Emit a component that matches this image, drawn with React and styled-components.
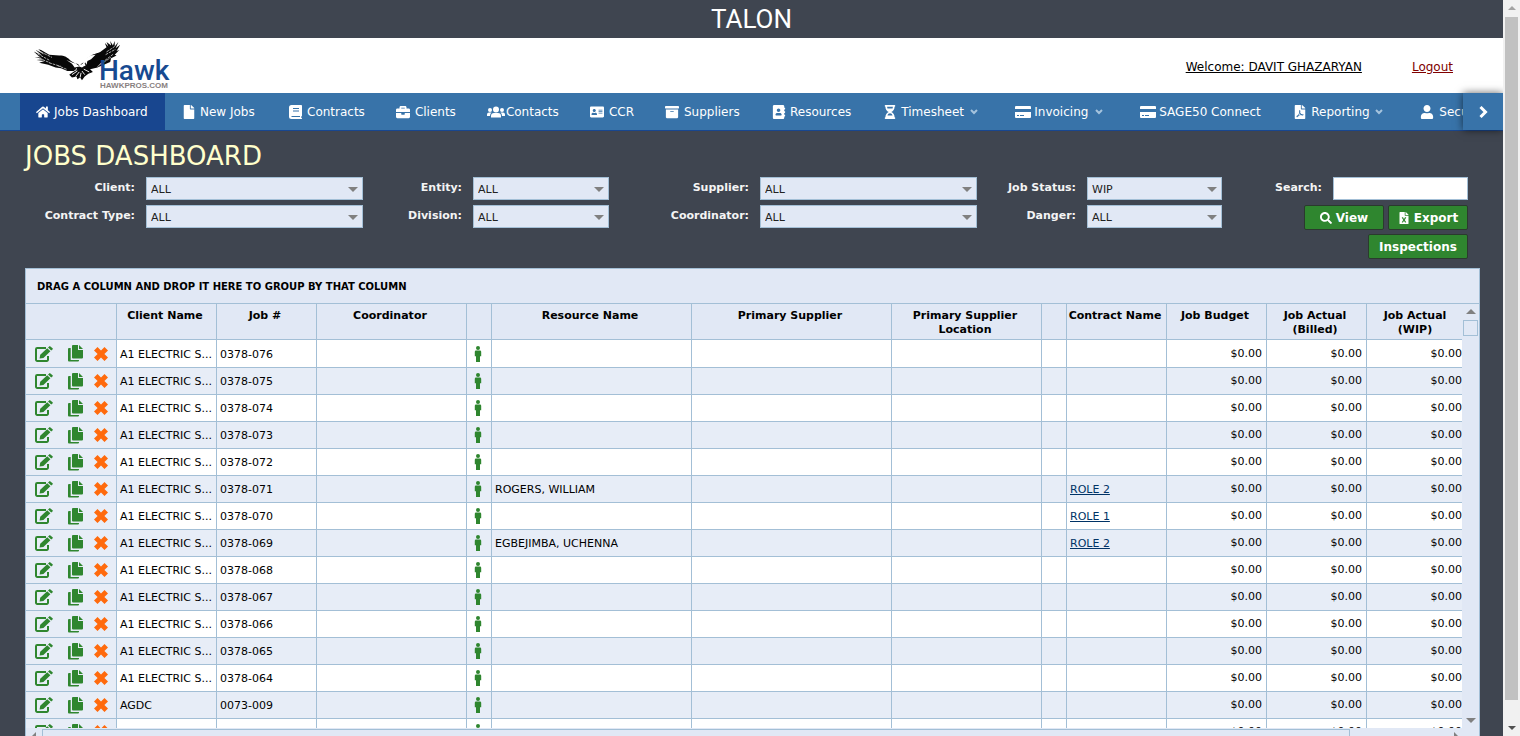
import React from "react";
import styled, { createGlobalStyle, css } from "styled-components";
import {
  FaHome, FaFile, FaBriefcase, FaAddressCard, FaArchive, FaAddressBook,
  FaHourglassHalf, FaFilePdf, FaUser, FaSearch, FaFileExcel,
} from "react-icons/fa";

const dark = "#3f4550";
const pale = "#e1e8f5";
const line = "#a3bfd6";
const green = "#2f862f";

const GlobalStyle = createGlobalStyle`
  * { box-sizing: border-box; }
  body {
    margin: 0;
    background: ${dark};
    font-family: "DejaVu Sans", Verdana, sans-serif;
    font-size: 11px;
    color: #000;
  }
`;

const Shell = styled.div`
  display: flex;
  height: 100vh;
  overflow: hidden;
`;

const Page = styled.div`
  flex: 1;
  min-width: 0;
  overflow: hidden;
`;

const PageScroll = styled.div`
  width: 17px;
  flex: none;
  display: flex;
  flex-direction: column;
  align-items: center;
  justify-content: space-between;
  padding: 6px 0;
  background: #f1f1f1;
`;

const PageThumb = styled.div`
  flex: 1;
  width: 13px;
  margin: 7px 0 26px;
  background: #c1c1c1;
`;

const Arrow = styled.span`
  width: 0;
  height: 0;
  flex: none;
  border: ${(p) => p.$size || 5}px solid transparent;
  ${(p) => p.$dir === "up" && css`border-top-width: 0; border-bottom-color: ${p.$color};`}
  ${(p) => p.$dir === "down" && css`border-bottom-width: 0; border-top-color: ${p.$color};`}
  ${(p) => p.$dir === "left" && css`border-left-width: 0; border-right-color: ${p.$color};`}
  ${(p) => p.$dir === "right" && css`border-right-width: 0; border-left-color: ${p.$color};`}
`;

const Banner = styled.div`
  height: 38px;
  display: flex;
  align-items: center;
  justify-content: center;
  font: 400 26px Roboto, sans-serif;
  color: #fff;
`;

const Header = styled.header`
  height: 55px;
  padding: 0 50px 0 20px;
  display: flex;
  align-items: center;
  background: #fff;
`;

const Logo = styled.svg`
  width: 160px;
  height: 55px;
  display: block;
  margin-right: auto;
`;

const HeaderLink = styled.a`
  margin-left: 50px;
  padding-top: 3px;
  font-size: 12px;
  color: ${(p) => p.$color};
`;

const Nav = styled.nav`
  height: 38px;
  display: flex;
  background: #3873a9;
  border-bottom: 1px solid #18468f;
`;

const NavStrip = styled.div`
  flex: 1;
  min-width: 0;
  display: flex;
  overflow: hidden;
  padding-left: 20px;
`;

const NavItem = styled.a`
  flex: none;
  min-width: ${(p) => p.$width}px;
  display: flex;
  align-items: center;
  padding: 0 15px;
  font-size: 12px;
  color: #fff;
  text-decoration: none;
  white-space: nowrap;
  background: ${(p) => (p.$active ? "#18468f" : "transparent")};
`;

const NavIcon = styled.span`
  width: ${(p) => (p.$tight ? 19 : 20)}px;
  display: flex;
  padding-left: ${(p) => (p.$wide ? 1 : 2)}px;
  font-size: 14px;
`;

const NavCaret = styled.svg`
  width: 8px;
  height: 6px;
  margin: 0 6px 0 auto;
  color: #a5c3dd;
`;

const NavNext = styled.button`
  width: 40px;
  flex: none;
  display: flex;
  align-items: center;
  justify-content: center;
  border: 0;
  padding: 0;
  color: #fff;
  background: #3873a9;
  box-shadow: 0 0 8px rgba(0, 0, 0, 0.6);
`;

const Main = styled.main`
  padding: 4px 23px 0 25px;
`;

const Title = styled.h1`
  margin: 0;
  font-size: 26px;
  font-weight: 400;
  line-height: 42px;
  color: #ffffcc;
`;

const Filters = styled.form`
  display: grid;
  grid-template-columns: 110fr 217fr 88fr 136fr 129fr 217fr 88fr 135fr 89fr 135fr;
  grid-template-rows: 23px 55px;
  gap: 5px 11px;
  margin-right: 12px;
`;

const Label = styled.label`
  text-align: right;
  font-weight: 700;
  line-height: 21px;
  color: #f4f4f4;
  white-space: nowrap;
`;

const SelectBox = styled.div`
  height: 23px;
  display: flex;
  align-items: center;
  padding: 2px 4px 0 0;
  background: ${pale};
  border: 1px solid ${line};
`;

const Select = styled.select`
  appearance: none;
  flex: 1;
  min-width: 0;
  height: 20px;
  padding: 0 4px;
  border: 0;
  background: transparent;
  font: inherit;
  color: #222;
`;

const SearchInput = styled.input`
  width: 100%;
  min-width: 0;
  height: 23px;
  padding: 0 4px;
  border: 1px solid ${line};
  background: #fff;
  font: inherit;
`;

const Actions = styled.div`
  grid-column: 9 / 11;
  display: flex;
  flex-wrap: wrap;
  justify-content: flex-end;
  align-content: flex-start;
  gap: 4px;
`;

const Button = styled.button`
  width: ${(p) => (p.$wide ? 100 : 80)}px;
  height: 25px;
  padding: 0;
  display: flex;
  align-items: center;
  justify-content: center;
  gap: 4px;
  border: 1px solid #2b3a2e;
  border-radius: 2px;
  background: ${green};
  color: #fff;
  font: bold 12px "DejaVu Sans", Verdana, sans-serif;
`;

const GridFrame = styled.section`
  margin-top: 8px;
  border: 1px solid ${line};
  background: ${pale};
`;

const GroupPanel = styled.div`
  height: 35px;
  padding-left: 11px;
  font-size: 10px;
  font-weight: 700;
  line-height: 35px;
  border-bottom: 1px solid ${line};
`;

const GridBody = styled.div`
  display: flex;
  height: 424px;
`;

const GridView = styled.div`
  flex: 1;
  min-width: 0;
  overflow: hidden;
`;

const Table = styled.table`
  width: 1441px;
  table-layout: fixed;
  border-collapse: separate;
  border-spacing: 0;
`;

const Th = styled.th`
  height: 36px;
  padding: 5px 4px 0 1px;
  vertical-align: top;
  line-height: 14px;
  white-space: nowrap;
  border-right: 1px solid ${line};
  border-bottom: 1px solid ${line};
`;

const Td = styled.td`
  height: 27px;
  padding: ${(p) => (p.$money ? "0 4px 1px" : "1px 3px 0")};
  overflow: hidden;
  white-space: nowrap;
  text-align: ${(p) => (p.$money ? "right" : "left")};
  border-right: 1px solid ${line};
  border-bottom: 1px solid ${line};
`;

const Row = styled.tr`
  background: ${(p) => (p.$alt ? "#e7edf7" : "#fff")};
  &:first-child td { height: 28px; }
`;

const ToolCell = styled(Td)`
  padding: 0 9px;
  background: #e7edf7;
`;

const PersonCell = styled(Td)`
  padding: 0 7px;
`;

const Tools = styled.div`
  display: flex;
  align-items: center;
`;

const IconButton = styled.button`
  display: flex;
  padding: 0;
  margin-right: ${(p) => p.$gap || 0}px;
  border: 0;
  background: none;
  color: ${(p) => p.$color || green};
`;

const RoleLink = styled.a`
  color: #003366;
`;

const VBar = styled.div`
  width: 17px;
  flex: none;
  display: flex;
  flex-direction: column;
  align-items: center;
  padding: 5px 0;
`;

const VThumb = styled.div`
  width: 15px;
  height: 16px;
  margin: 6px 0 auto;
  border: 1px solid ${line};
`;

const HBar = styled.div`
  height: 17px;
  display: flex;
  align-items: center;
  padding: 0 20px 0 5px;
`;

const HTrack = styled.div`
  flex: 1;
  display: flex;
  height: 15px;
  margin: 0 6px;
`;

const HThumb = styled.div`
  width: 93%;
  border: 1px solid ${line};
`;

const EditIcon = () => (
  <svg width="18" height="16" viewBox="0 0 18 16" aria-hidden="true">
    <path d="M11 2H2.200A1.200 1.200 0 0 0 1 3.200V13.800A1.200 1.200 0 0 0 2.200 15H11.800A1.200 1.200 0 0 0 13 13.800V10" fill="none" stroke="currentColor" strokeWidth="2" />
    <path d="M4.600 12.400L5.200 8.800L12.200 2.200L15.400 5.200L8.400 11.900ZM13 1.500L14.200.4Q14.800-.2 15.400.4L17.600 2.300Q18.100 2.900 17.500 3.500L16.200 4.600Z" fill="currentColor" />
  </svg>
);

const CopyIcon = () => (
  <svg width="15" height="17" viewBox="0 0 15 17" aria-hidden="true">
    <path d="M5 0H10V5H15V12.500Q15 13.500 14 13.500H5Q4 13.500 4 12.500V1Q4 0 5 0ZM11 0L15 4H11ZM0 4Q0 3 1 3H2.700V15H11V15.500Q11 16.500 10 16.500H1Q0 16.500 0 15.500Z" fill="currentColor" />
  </svg>
);

const CrossIcon = () => (
  <svg width="14" height="14" viewBox="0 0 14 14" aria-hidden="true">
    <path d="M3.500 0L7 3.600L10.500 0L14 3.500L10.400 7L14 10.500L10.500 14L7 10.400L3.500 14L0 10.500L3.600 7L0 3.500Z" fill="currentColor" />
  </svg>
);

const PersonIcon = () => (
  <svg width="8" height="16" viewBox="0 0 8 16" aria-hidden="true">
    <circle cx="4" cy="2" r="2" fill="currentColor" />
    <path d="M2 4.500H6Q7.200 4.500 7.200 5.700V10.300H6V16H2V10.300H.8V5.700Q.8 4.500 2 4.500Z" fill="currentColor" />
  </svg>
);

const BookIcon = () => (
  <svg width="13" height="14" viewBox="0 0 13 14" aria-hidden="true">
    <path d="M2.500 0H12.200Q13 0 13 .8V10.800L12.300 11.500V13L13 13.200V14H2.500Q0 14 0 11.500V2.500Q0 0 2.500 0Z" fill="currentColor" />
    <path d="M4 3.500H10M4 6H10M2.500 11.500H11" stroke="#3873a9" strokeWidth="1" />
  </svg>
);

const CardIcon = () => (
  <svg width="16" height="14" viewBox="0 0 16 14" aria-hidden="true">
    <path d="M1 1H15Q16 1 16 2V4H0V2Q0 1 1 1ZM0 7H16V12Q16 13 15 13H1Q0 13 0 12Z" fill="currentColor" />
    <path d="M2 10.500H4M5 10.500H9" stroke="#3873a9" strokeWidth="1" />
  </svg>
);

const GroupIcon = () => (
  <svg width="18" height="14" viewBox="0 0 18 14" aria-hidden="true">
    <g fill="currentColor">
      <circle cx="9" cy="4.500" r="3" />
      <circle cx="3" cy="5" r="2" />
      <circle cx="15" cy="5" r="2" />
      <path d="M4 12.500V11Q4 8 7 8H11Q14 8 14 11V12.500ZM0 11V9.500Q0 7.500 2 7.500H4.500Q3 8.800 3 11ZM18 11V9.500Q18 7.500 16 7.500H13.500Q15 8.800 15 11Z" />
    </g>
  </svg>
);

const Caret = () => (
  <NavCaret viewBox="0 0 8 6" aria-hidden="true">
    <path d="M1 1L4 4L7 1" fill="none" stroke="currentColor" strokeWidth="2" />
  </NavCaret>
);

const NextIcon = () => (
  <svg width="9" height="12" viewBox="0 0 9 12" aria-hidden="true">
    <path d="M1.500 1L6.500 6L1.500 11" fill="none" stroke="currentColor" strokeWidth="3" />
  </svg>
);

const HawkLogo = () => (
  <Logo viewBox="0 0 160 55" role="img" aria-label="Hawk">
    <g transform="translate(1 3) scale(.91)">
      <g fill="#080808">
        <path d="M13 13L20 17L14 11.500L23 16L16 9.500L26 15L19 9L22 10L31 15L42 16C48 16 51 18 55 22L60 25L62 29L58 33L51 33L44 30L38 29L30 26L25 25L20 24L26 22L17 21L25 20L15 17.500L22 18Z" />
        <path d="M69 27L72 20C76 15 82 14 87 12L94 7L92 2L96 6L94 1L99 5L98 0L101 5L103 0L103 6L107 1L104 8L109 4L105 11L108 10L103 15L105 16L99 19L98 23L91 26L84 29L76 31L71 32Z" />
        <path d="M61 26L66 22L71 25L74 29L79 34L74 36L70 39L67 43L65 40L62 42L61 39L56 40L53 37L59 33Z" />
      </g>
      <path d="M50 21L57 24L61 25L65 22L69 22L71 27L67 29L64 28L59 29L56 25ZM69 21L76 16L82 15L77 20L73 22L72 26Z" fill="#fff" />
      <path d="M60 33L61 30M56 37L62 33M60 39L64 34M65 40L66 35M70 37L67 33M75 34L69 31" fill="none" stroke="#fff" strokeWidth="1" />
      <path d="M18 14L31 21M20 19L32 24M22 12L34 18M31 24L44 28M86 26L102 14M84 28L99 18M94 12L103 6M93 15L104 9M40 27L50 31" fill="none" stroke="#b8b8b8" strokeWidth="1" strokeDasharray="3 1" />
      <path d="M61 25L64 27M68 24L66 26M59 30L57 33M72 28L68 29" stroke="#111" strokeWidth="1" />
    </g>
    <text x="79" y="42" fontFamily="Roboto, sans-serif" fontSize="28" fontWeight="500" fill="#174a91">Hawk</text>
    <text x="80" y="50" fontFamily="Liberation Sans, Arial, sans-serif" fontSize="8" fontWeight="700" fill="#888080">HAWKPROS.COM</text>
  </Logo>
);

const navItems = [
  { text: "Jobs Dashboard", icon: FaHome, width: 145, active: true, wide: true, tight: true },
  { text: "New Jobs", icon: FaFile, width: 107 },
  { text: "Contracts", icon: BookIcon, width: 107 },
  { text: "Clients", icon: FaBriefcase, width: 91, wide: true },
  { text: "Contacts", icon: GroupIcon, width: 103, wide: true },
  { text: "CCR", icon: FaAddressCard, width: 75, wide: true },
  { text: "Suppliers", icon: FaArchive, width: 106, wide: true },
  { text: "Resources", icon: FaAddressBook, width: 111 },
  { text: "Timesheet", icon: FaHourglassHalf, width: 133, menu: true },
  { text: "Invoicing", icon: CardIcon, width: 125, menu: true, wide: true },
  { text: "SAGE50 Connect", icon: CardIcon, width: 152, wide: true },
  { text: "Reporting", icon: FaFilePdf, width: 128, menu: true },
  { text: "Security", icon: FaUser, width: 120, menu: true, wide: true },
];

const widths = [91, 100, 100, 150, 25, 200, 200, 150, 25, 100, 100, 100, 100];
const heads = ["", "Client Name", "Job #", "Coordinator", "", "Resource Name", "Primary Supplier",
  "Primary Supplier\nLocation", "", "Contract Name", "Job Budget", "Job Actual\n(Billed)", "Job Actual\n(WIP)"];

const a1 = "A1 ELECTRIC S...";
const jobs = [
  [a1, "0378-076"], [a1, "0378-075"], [a1, "0378-074"], [a1, "0378-073"], [a1, "0378-072"],
  [a1, "0378-071", "ROGERS, WILLIAM", "ROLE 2"], [a1, "0378-070", "", "ROLE 1"],
  [a1, "0378-069", "EGBEJIMBA, UCHENNA", "ROLE 2"], [a1, "0378-068"], [a1, "0378-067"],
  [a1, "0378-066"], [a1, "0378-065"], [a1, "0378-064"], ["AGDC", "0073-009"], ["", ""],
];

function FilterSelect({ id, label, value = "ALL" }) {
  return (
    <>
      <Label htmlFor={id}>{label}</Label>
      <SelectBox>
        <Select id={id} defaultValue={value}><option>{value}</option></Select>
        <Arrow $dir="down" $color="#808080" />
      </SelectBox>
    </>
  );
}

function JobRow({ job, alt }) {
  const [client, number, resource, role] = job;
  return (
    <Row $alt={alt}>
      <ToolCell>
        <Tools>
          <IconButton type="button" aria-label="Edit" $gap={15}><EditIcon /></IconButton>
          <IconButton type="button" aria-label="Copy" $gap={11}><CopyIcon /></IconButton>
          <IconButton type="button" aria-label="Delete" $color="#ff6a0d"><CrossIcon /></IconButton>
        </Tools>
      </ToolCell>
      <Td>{client}</Td>
      <Td>{number}</Td>
      <Td />
      <PersonCell><IconButton type="button" aria-label="Resource"><PersonIcon /></IconButton></PersonCell>
      <Td>{resource}</Td>
      <Td />
      <Td />
      <Td />
      <Td>{role && <RoleLink href="#role">{role}</RoleLink>}</Td>
      <Td $money>$0.00</Td>
      <Td $money>$0.00</Td>
      <Td $money>$0.00</Td>
    </Row>
  );
}

export default function App() {
  return (
    <Shell>
      <GlobalStyle />
      <Page>
        <Banner>TALON</Banner>
        <Header>
          <HawkLogo />
          <HeaderLink href="#profile" $color="#000">Welcome: DAVIT GHAZARYAN</HeaderLink>
          <HeaderLink href="#logout" $color="#800000">Logout</HeaderLink>
        </Header>
        <Nav>
          <NavStrip>
            {navItems.map(({ text, icon: Icon, width, active, wide, tight, menu }) => (
              <NavItem key={text} href="#nav" $width={width} $active={active}>
                <NavIcon $wide={wide} $tight={tight}><Icon /></NavIcon>
                {text}
                {menu && <Caret />}
              </NavItem>
            ))}
          </NavStrip>
          <NavNext type="button" aria-label="More"><NextIcon /></NavNext>
        </Nav>
        <Main>
          <Title>JOBS DASHBOARD</Title>
          <Filters>
            <FilterSelect id="client" label="Client:" />
            <FilterSelect id="entity" label="Entity:" />
            <FilterSelect id="supplier" label="Supplier:" />
            <FilterSelect id="status" label="Job Status:" value="WIP" />
            <Label htmlFor="search">Search:</Label>
            <SearchInput id="search" type="text" />
            <FilterSelect id="type" label="Contract Type:" />
            <FilterSelect id="division" label="Division:" />
            <FilterSelect id="coordinator" label="Coordinator:" />
            <FilterSelect id="danger" label="Danger:" />
            <Actions>
              <Button type="button"><FaSearch />View</Button>
              <Button type="button"><FaFileExcel />Export</Button>
              <Button type="button" $wide>Inspections</Button>
            </Actions>
          </Filters>
          <GridFrame>
            <GroupPanel>DRAG A COLUMN AND DROP IT HERE TO GROUP BY THAT COLUMN</GroupPanel>
            <GridBody>
              <GridView>
                <Table>
                  <colgroup>{widths.map((w, i) => <col key={i} width={w} />)}</colgroup>
                  <thead>
                    <tr>
                      {heads.map((h, i) => (
                        <Th key={i} scope="col">
                          {h.split("\n").map((part, j) => <React.Fragment key={j}>{j > 0 && <br />}{part}</React.Fragment>)}
                        </Th>
                      ))}
                    </tr>
                  </thead>
                  <tbody>{jobs.map((job, i) => <JobRow key={i} job={job} alt={i % 2 === 1} />)}</tbody>
                </Table>
              </GridView>
              <VBar>
                <Arrow $dir="up" $color="#808080" />
                <VThumb />
                <Arrow $dir="down" $color="#808080" />
              </VBar>
            </GridBody>
            <HBar>
              <Arrow $dir="left" $color="#808080" />
              <HTrack><HThumb /></HTrack>
              <Arrow $dir="right" $color="#808080" />
            </HBar>
          </GridFrame>
        </Main>
      </Page>
      <PageScroll>
        <Arrow $dir="up" $size={4} $color="#a3a3a3" />
        <PageThumb />
        <Arrow $dir="down" $size={4} $color="#505050" />
      </PageScroll>
    </Shell>
  );
}
